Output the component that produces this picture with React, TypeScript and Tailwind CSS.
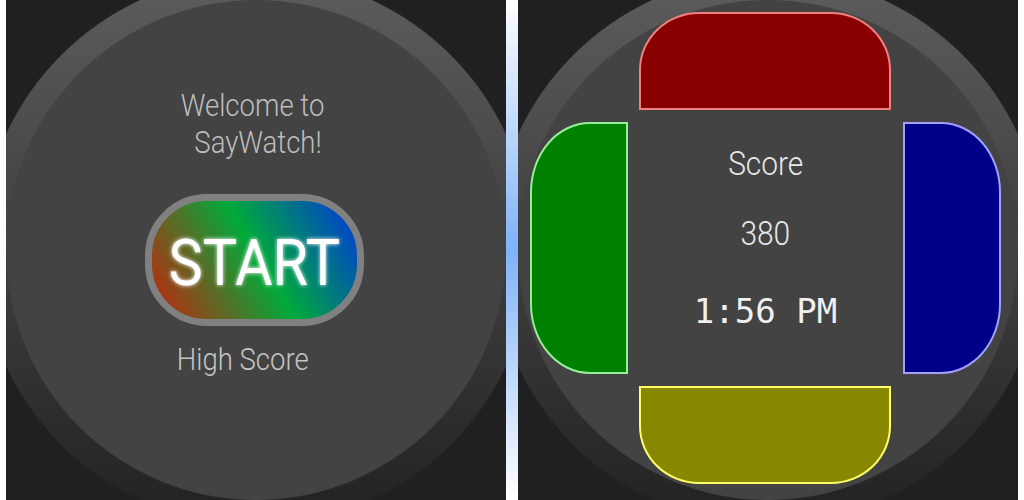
import React from "react";

const panelBg =
  "w-[500px] h-[500px] shrink-0 bg-[radial-gradient(circle_276px_at_50%_50%,transparent_275px,#202020_276px),linear-gradient(to_bottom,#5a5a5a,#242424)]";

function LeftFace() {
  return (
    <div className={panelBg}>
      <div className="w-full h-full rounded-full bg-[#434343] flex flex-col items-center pt-[87px] font-['Roboto',sans-serif]">
        <div className="flex flex-col items-center text-[32px] leading-[37px] font-light text-[#bdbdbd]">
          <div className="pr-[7px]">
            <span className="inline-block scale-x-[0.86]">Welcome to</span>
          </div>
          <div className="pl-[5px]">
            <span className="inline-block scale-x-[0.86]">SayWatch!</span>
          </div>
        </div>
        <div className="mt-[33px] mr-[3px] w-[219px] h-[132px] rounded-[62px] border-[7px] border-[#808080] bg-[linear-gradient(60deg,#c8200c,#00aa3a_52%,#0036de)] flex items-center justify-center pt-[8px]">
          <span className="inline-block scale-x-[0.9] text-[64px] leading-none font-normal text-white [text-shadow:0_0_5px_#ffffff]">
            START
          </span>
        </div>
        <div className="mt-[15px] pr-[27px] text-[32px] leading-[37px] font-light text-[#c4c4c4]">
          <span className="inline-block scale-x-[0.86]">High Score</span>
        </div>
      </div>
    </div>
  );
}

function RightFace() {
  return (
    <div className={panelBg}>
      <div className="w-full h-full rounded-full bg-[#434343] flex flex-col items-start pt-[12px] pl-[12px] gap-[12px]">
        <div className="ml-[109px] w-[252px] h-[98px] bg-[#880000] border-2 border-[#f08080] rounded-tl-[60px_58px] rounded-tr-[60px_58px]" />
        <div className="flex h-[252px]">
          <div className="w-[98px] h-[252px] bg-[#008000] border-2 border-[#98ee98] rounded-tl-[60px_70px] rounded-bl-[60px_70px]" />
          <div className="w-[275px] flex flex-col items-center pt-[21px] font-['Roboto',sans-serif]">
            <div className="text-[34px] leading-[40px] font-light text-[#e8e8e8]">
              <span className="inline-block scale-x-[0.88]">Score</span>
            </div>
            <div className="mt-[30px] text-[34px] leading-[40px] font-light text-[#e8e8e8]">
              <span className="inline-block scale-x-[0.88]">380</span>
            </div>
            <div className="mt-[38px] text-[34px] leading-[40px] text-[#f0f0f0] font-['DejaVu_Sans_Mono',monospace] whitespace-pre">
              1:56 PM
            </div>
          </div>
          <div className="w-[98px] h-[252px] bg-[#000088] border-2 border-[#a0a0ff] rounded-tr-[60px_70px] rounded-br-[60px_70px]" />
        </div>
        <div className="ml-[109px] w-[252px] h-[98px] bg-[#888800] border-2 border-[#ffff66] rounded-bl-[60px_58px] rounded-br-[60px_58px]" />
      </div>
    </div>
  );
}

export default function App() {
  return (
    <div className="w-[1024px] h-[500px] flex bg-white px-[6px] overflow-hidden">
      <LeftFace />
      <div className="w-[12px] h-[500px] shrink-0 bg-[linear-gradient(to_bottom,#ffffff,#7fb2f8_50%,#ffffff)]" />
      <RightFace />
    </div>
  );
}
